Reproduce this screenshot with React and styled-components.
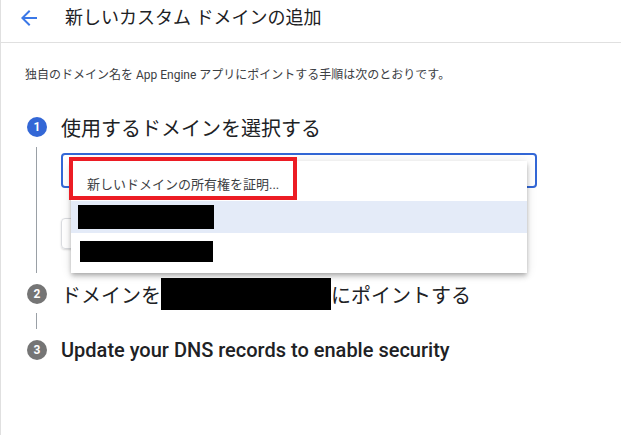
import React from "react";
import styled, { createGlobalStyle } from "styled-components";

const Global = createGlobalStyle`
  html, body { margin: 0; padding: 0; background: #fff; }
  body { font-family: Roboto, "Noto Sans CJK JP", "Noto Sans", sans-serif; color: #202124; }
  * { box-sizing: border-box; }
`;

const Page = styled.div`
  width: 621px;
  height: 435px;
  border-left: 1px solid #e0e0e0;
  overflow: hidden;
`;

const Header = styled.div`
  height: 43px;
  border-bottom: 1px solid #e0e0e0;
  display: flex;
  align-items: center;
  padding-left: 16px;
  gap: 24px;
`;

const BackIcon = styled.svg`
  width: 24px;
  height: 24px;
  fill: #3b78e7;
  margin-top: -6px;
`;

const Title = styled.h1`
  margin: 0 0 6px;
  font-size: 18px;
  font-weight: 400;
  line-height: 24px;
  font-family: Roboto, "Noto Sans CJK JP", sans-serif;
  color: #202124;
`;

const Content = styled.div`
  padding: 24px 0 0 24px;
`;

const Description = styled.p`
  margin: 0;
  font-size: 12px;
  line-height: 16px;
  color: #3c4043;
  font-family: Roboto, "Noto Sans CJK JP", sans-serif;
`;

const Steps = styled.div`
  margin-top: 30px;
  padding-left: 26px;
`;

const StepHead = styled.div`
  display: flex;
  align-items: center;
  gap: 14px;
  height: 28px;
  font-size: 20px;
  font-weight: ${p => (p.$latin ? 500 : 400)};
  font-family: ${p => (p.$latin ? "Roboto, sans-serif" : `"Noto Sans CJK JP", sans-serif`)};
  color: #202124;
  white-space: nowrap;
`;

const Circle = styled.span`
  flex: none;
  width: 20px;
  height: 20px;
  border-radius: 50%;
  background: ${p => (p.$active ? "#3367d6" : "#757575")};
  color: #fff;
  font: 700 12px/20px Roboto, sans-serif;
  text-align: center;
`;

const StepBody = styled.div`
  margin: 6px 0 7px 9px;
  border-left: 1px solid #9aa0a6;
  padding: 6px 0 24px 24px;
`;

const Connector = styled.div`
  margin: 5px 0 7px 9px;
  height: 16px;
  border-left: 1px solid #9aa0a6;
`;

const SelectWrap = styled.div`
  position: relative;
`;

const Select = styled.div`
  width: 476px;
  height: 35px;
  border: 2px solid #3367d6;
  border-radius: 4px;
`;

const GhostButton = styled.div`
  margin-top: 30px;
  width: 110px;
  height: 31px;
  border-radius: 4px;
  border: 1px solid #dadce0;
  box-shadow: 0 1px 2px rgba(0, 0, 0, 0.15);
`;

const Menu = styled.div`
  position: absolute;
  top: 8px;
  left: 10px;
  width: 456px;
  padding: 8px 0;
  background: #fff;
  box-shadow: 0 2px 4px -1px rgba(0,0,0,.2), 0 4px 5px 0 rgba(0,0,0,.14), 0 1px 10px 0 rgba(0,0,0,.12);
  z-index: 2;
`;

const MenuItem = styled.div`
  position: relative;
  height: 32px;
  display: flex;
  align-items: flex-start;
  padding-left: 16px;
  background: ${p => (p.$selected ? "#e4ebf8" : "#fff")};
  font-size: 13px;
  line-height: 32px;
  color: #3c4043;
  font-family: Roboto, "Noto Sans CJK JP", sans-serif;
`;

const Redacted = styled.span`
  display: inline-block;
  background: #000;
  width: ${p => p.$w}px;
  height: ${p => p.$h}px;
  margin-left: ${p => p.$x || 0}px;
  margin-top: ${p => p.$y || 0}px;
  flex: none;
`;

const Highlight = styled.div`
  position: absolute;
  left: -2px;
  top: -12px;
  width: 228px;
  height: 43px;
  border: 4px solid #ec1c24;
  z-index: 3;
  pointer-events: none;
`;

const InlineRedact = styled.span`
  display: inline-block;
  flex: none;
  width: 170px;
  height: 32px;
  margin: 0 -14px;
  background: #000;
`;

export default function App() {
  return (
    <>
      <Global />
      <Page>
        <Header>
          <BackIcon viewBox="0 0 24 24">
            <path d="M20 11H7.83l5.59-5.59L12 4l-8 8 8 8 1.41-1.41L7.83 13H20v-2z" />
          </BackIcon>
          <Title>新しいカスタム ドメインの追加</Title>
        </Header>
        <Content>
          <Description>
            独自のドメイン名を App Engine アプリにポイントする手順は次のとおりです。
          </Description>
        </Content>
        <Steps>
          <StepHead>
            <Circle $active>1</Circle>
            使用するドメインを選択する
          </StepHead>
          <StepBody>
            <SelectWrap>
              <Select />
              <Menu>
                <MenuItem>
                  新しいドメインの所有権を証明...
                  <Highlight />
                </MenuItem>
                <MenuItem $selected>
                  <Redacted $w={136} $h={24} $x={-9} $y={4} />
                </MenuItem>
                <MenuItem>
                  <Redacted $w={133} $h={21} $x={-7} $y={8} />
                </MenuItem>
              </Menu>
              <GhostButton />
            </SelectWrap>
          </StepBody>
          <StepHead>
            <Circle>2</Circle>
            <span>ドメインを</span>
            <InlineRedact />
            <span>にポイントする</span>
          </StepHead>
          <Connector />
          <StepHead $latin>
            <Circle>3</Circle>
            Update your DNS records to enable security
          </StepHead>
        </Steps>
      </Page>
    </>
  );
}
